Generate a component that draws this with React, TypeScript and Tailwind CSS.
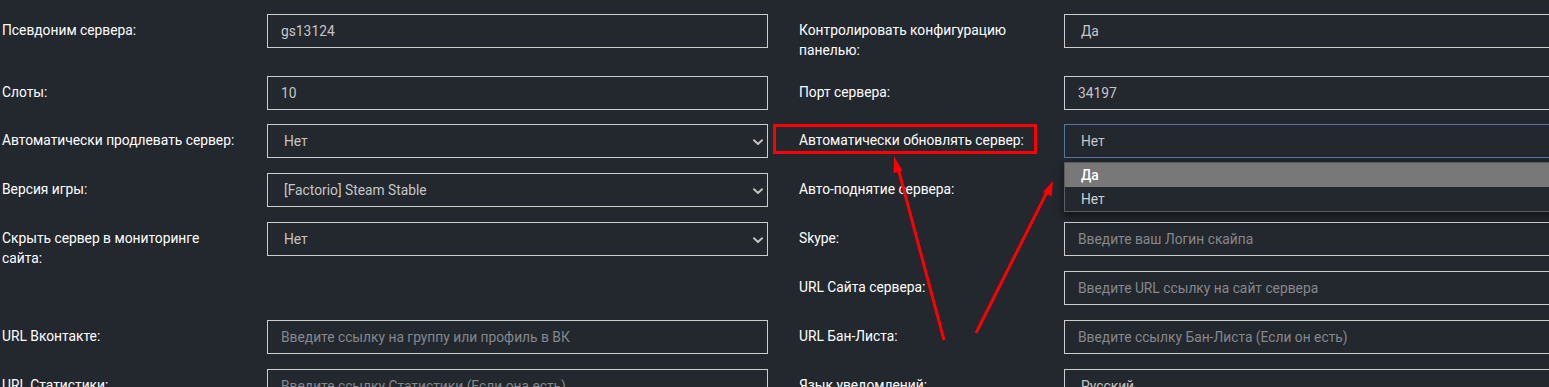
import React from "react";

type FieldProps = {
  label?: React.ReactNode;
  kind?: "input" | "select" | "focus" | "plain" | "empty";
  value?: string;
  placeholder?: string;
};

function Chevron() {
  return (
    <svg width="10" height="7" viewBox="0 0 10 7" className="absolute right-[4px] top-[14px]">
      <path d="M1 1.2 L5 5 L9 1.2" fill="none" stroke="#c0c0c0" strokeWidth="2" strokeLinecap="round" strokeLinejoin="round" />
    </svg>
  );
}

function Field({ label, kind = "input", value, placeholder }: FieldProps) {
  if (kind === "empty") return <div className="w-[797px] shrink-0" />;
  return (
    <div className="flex w-[797px] shrink-0">
      <div className="w-[265px] shrink-0 pt-[6px] text-[13.8px] leading-[20px] text-white whitespace-nowrap">
        {label}
      </div>
      <div
        className={
          "relative w-[501px] h-[34px] shrink-0 border flex items-center text-[13.8px] " +
          (kind === "focus" ? "border-[#56779c] " : "border-[#cdcdcd] ") +
          (kind === "input" ? "pl-[13px]" : "pl-[16px]")
        }
      >
        {value ? (
          <span className="text-[#c6c6c6]">{value}</span>
        ) : (
          <span className="text-[#85888d]">{placeholder}</span>
        )}
        {kind === "select" && <Chevron />}
      </div>
    </div>
  );
}

export default function App() {
  return (
    <div className="relative w-[1549px] h-[387px] overflow-hidden bg-[#23272e] font-['Roboto',sans-serif]">
      <div className="flex flex-col pt-[14px] pl-[2px]">
        <div className="flex h-[62px]">
          <Field label="Псевдоним сервера:" value="gs13124" />
          <Field
            label={
              <>
                Контролировать конфигурацию
                <br />
                панелью:
              </>
            }
            kind="plain"
            value="Да"
          />
        </div>
        <div className="flex h-[48px]">
          <Field label="Слоты:" value="10" />
          <Field label="Порт сервера:" value="34197" />
        </div>
        <div className="flex h-[49px]">
          <Field label="Автоматически продлевать сервер:" kind="select" value="Нет" />
          <Field label="Автоматически обновлять сервер:" kind="focus" value="Нет" />
        </div>
        <div className="flex h-[49px]">
          <Field label="Версия игры:" kind="select" value="[Factorio] Steam Stable" />
          <Field label="Авто-поднятие сервера:" kind="select" value="Нет" />
        </div>
        <div className="flex h-[49px]">
          <Field
            label={
              <>
                Скрыть сервер в мониторинге
                <br />
                сайта:
              </>
            }
            kind="select"
            value="Нет"
          />
          <Field label="Skype:" placeholder="Введите ваш Логин скайпа" />
        </div>
        <div className="flex h-[49px]">
          <Field kind="empty" />
          <Field label="URL Сайта сервера:" placeholder="Введите URL ссылку на сайт сервера" />
        </div>
        <div className="flex h-[49px]">
          <Field label="URL Вконтакте:" placeholder="Введите ссылку на группу или профиль в ВК" />
          <Field label="URL Бан-Листа:" placeholder="Введите ссылку Бан-Листа (Если он есть)" />
        </div>
        <div className="flex h-[49px]">
          <Field label="URL Статистики:" placeholder="Введите ссылку Статистики (Если она есть)" />
          <Field label="Язык уведомлений:" kind="plain" value="Русский" />
        </div>
      </div>

      {/* open dropdown list */}
      <div className="absolute left-[1064px] top-[162px] w-[501px] h-[50px] border border-[#5c5c5c] bg-[#23272e] shadow-[0_4px_8px_rgba(0,0,0,0.5)] text-[13.8px]">
        <div className="h-[24px] bg-[#787878] text-white pl-[16px] flex items-center font-medium">Да</div>
        <div className="h-[24px] text-[#d0d0d0] pl-[16px] flex items-center">Нет</div>
      </div>

      {/* annotations */}
      <svg className="absolute left-0 top-0 pointer-events-none" width="1549" height="387" viewBox="0 0 1549 387">
        <rect x="774.5" y="125.5" width="261" height="27" fill="none" stroke="#ff0000" strokeWidth="3" />
        <line x1="944" y1="340" x2="898" y2="168" stroke="#ff0000" strokeWidth="3" />
        <polygon points="894,156 902.5,171 893.5,173" fill="#ff0000" />
        <line x1="976" y1="333" x2="1047" y2="192" stroke="#ff0000" strokeWidth="3" />
        <polygon points="1053,181 1051.5,196.5 1043,192" fill="#ff0000" />
      </svg>
    </div>
  );
}
